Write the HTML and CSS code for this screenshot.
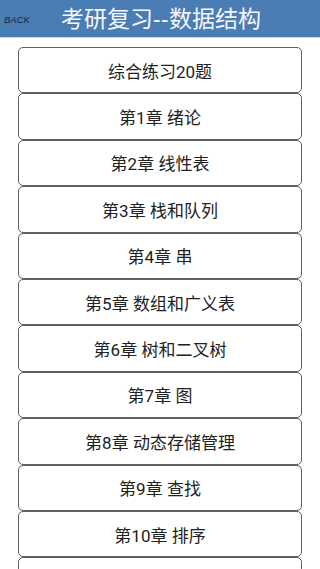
FILE: index.html
```html
<!DOCTYPE html>
<html lang="zh">
<head>
<meta charset="utf-8">
<meta name="viewport" content="width=device-width, initial-scale=1">
<link rel="stylesheet" href="styles.css">
</head>
<body>
<header class="topbar">
  <span class="back">BACK</span>
  <h1 class="title">考研复习<span class="dash">--</span>数据结构</h1>
</header>
<main class="list">
  <div class="item">综合练习20题</div>
  <div class="item">第1章 绪论</div>
  <div class="item">第2章 线性表</div>
  <div class="item">第3章 栈和队列</div>
  <div class="item">第4章 串</div>
  <div class="item">第5章 数组和广义表</div>
  <div class="item">第6章 树和二叉树</div>
  <div class="item">第7章 图</div>
  <div class="item">第8章 动态存储管理</div>
  <div class="item">第9章 查找</div>
  <div class="item">第10章 排序</div>
  <div class="item"></div>
</main>
</body>
</html>
```
FILE: styles.css
```css
html, body {
  margin: 0;
  padding: 0;
  background: #ffffff;
  overflow: hidden;
  height: 569px;
}
body {
  font-family: Roboto, "Noto Sans CJK SC", sans-serif;
}
.topbar {
  position: relative;
  height: 37px;
  background: #4a7db4;
  border-bottom: 1px solid #c9d7e6;
  display: flex;
  align-items: center;
  justify-content: center;
}
.back {
  position: absolute;
  left: 4px;
  top: 14px;
  font-family: "Liberation Sans", sans-serif;
  font-style: italic;
  font-size: 9.5px;
  color: #1a2440;
}
.title {
  margin: 0;
  font-weight: normal;
  font-size: 23px;
  color: #f4f6fa;
  line-height: 1;
  padding-left: 2px;
}
.dash {
  font-family: "Noto Sans", sans-serif;
  letter-spacing: 0.5px;
}
.list {
  padding: 9px 18px 0 18px;
  display: flex;
  flex-direction: column;
}
.item {
  height: 46.4px;
  box-sizing: border-box;
  border: 1.5px solid #5f5f5f;
  border-radius: 5px;
  display: flex;
  align-items: center;
  justify-content: center;
  font-size: 17px;
  color: #222222;
  flex-shrink: 0;
}
```
